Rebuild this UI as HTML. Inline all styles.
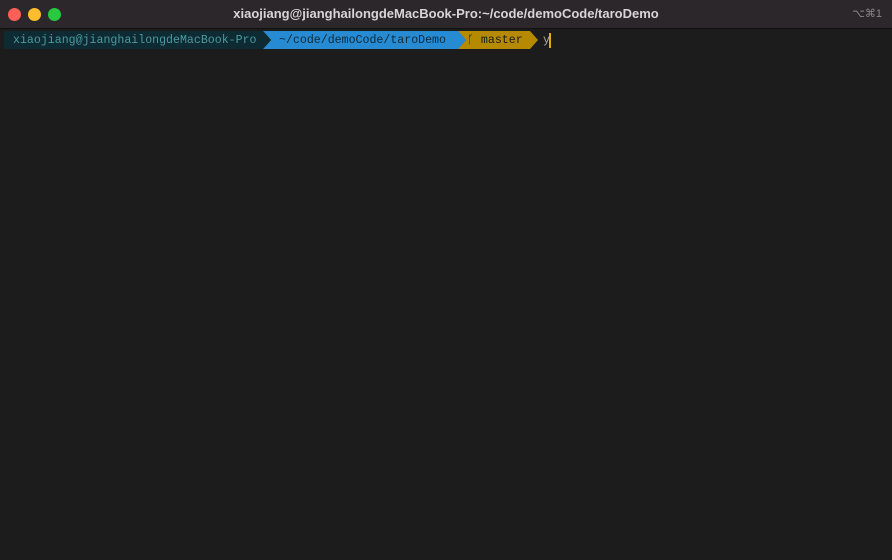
<html><head><style>
body{margin:0;width:892px;height:560px;background:#1c1c1c;overflow:hidden;font-family:"Liberation Mono",monospace}
.tb{position:absolute;left:0;top:0;width:892px;height:28px;background:#2b272b;border-bottom:1px solid #111}
.d{position:absolute;top:8px;width:13px;height:13px;border-radius:50%}
.t{position:absolute;left:0;width:892px;top:6px;text-align:center;color:#d8d4d8;font:bold 13px "Liberation Sans",sans-serif}
.k{position:absolute;right:10px;top:7px;color:#8a868a;font:11px "Liberation Sans",sans-serif}
.p{position:absolute;top:32px;height:18px;line-height:18px;font-size:11.6px;white-space:pre}
</style></head><body>
<div class="tb"><div class="d" style="left:8px;background:#fe5f57"></div><div class="d" style="left:28px;background:#febc2e"></div><div class="d" style="left:48px;background:#28c840"></div>
<div class="t">xiaojiang@jianghailongdeMacBook-Pro:~/code/demoCode/taroDemo</div><div class="k">⌥⌘1</div></div>
<div style="position:absolute;top:31px;left:4px;width:259px;height:18px;background:#0e2a33"></div>
<div class="p" style="left:13px;color:#4a9aa0">xiaojiang@jianghailongdeMacBook-Pro</div>
<svg style="position:absolute;left:0;top:31px" width="892" height="18">
<polygon points="263,0 458,0 466,9 458,18 263,18 271,9" fill="#268bd2"/>
<polygon points="263,0 271,9 263,18" fill="#0e2a33"/>
<polygon points="458,0 530,0 538,9 530,18 458,18 466,9" fill="#b58900"/>
<polygon points="458,0 466,9 458,18" fill="#268bd2"/>
<rect x="549" y="2" width="2" height="15" fill="#e0b000"/>
</svg>
<div class="p" style="left:279px;color:#0d2a3a">~/code/demoCode/taroDemo</div>
<div class="p" style="left:467px;color:#1c1c1c">ᚴ master</div>
<div class="p" style="left:543px;color:#aaa">y</div>
</body></html>
